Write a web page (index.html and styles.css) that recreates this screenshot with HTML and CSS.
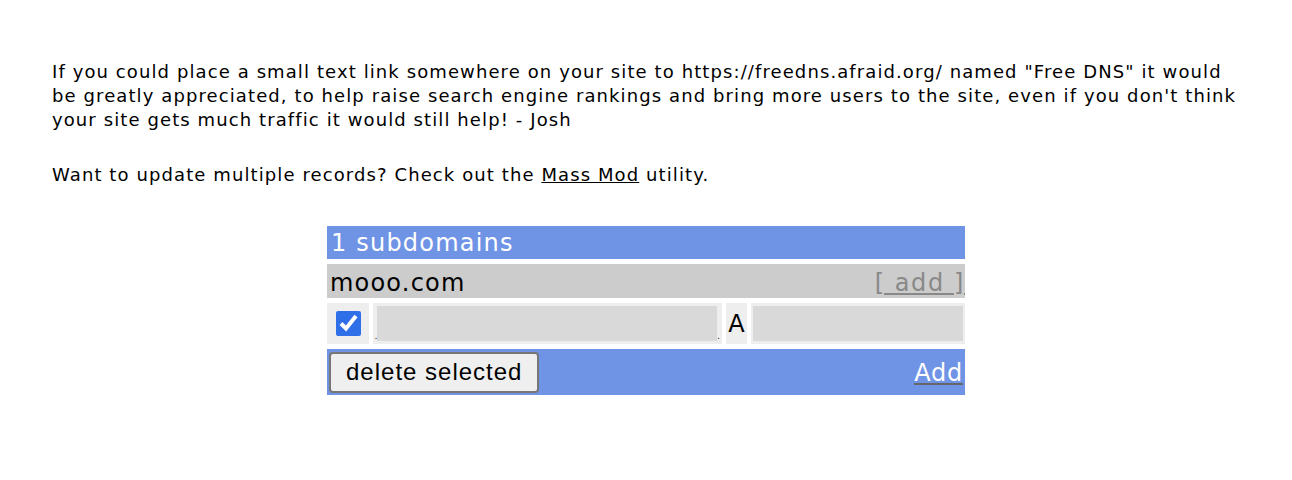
FILE: index.html
```html
<!DOCTYPE html>
<html lang="en">
<head>
  <meta charset="UTF-8" />
  <title>Subdomains</title>
  <link rel="stylesheet" href="styles.css">
</head>
<body>

<div class="content">
  <p class="note">If you could place a small text link somewhere on your site to https://freedns.afraid.org/ named "Free DNS" it would be greatly appreciated, to help raise search engine rankings and bring more users to the site, even if you don't think your site gets much traffic it would still help! - Josh</p>

  <p class="note">Want to update multiple records? Check out the <a href="#">Mass Mod</a> utility.</p>

  <form>
    <table class="records">
      <!-- header -->
      <tr>
        <td colspan="4" class="head">1 subdomains</td>
      </tr>

      <!-- domain row -->
      <tr>
        <td colspan="4" class="domain">
          <span>mooo.com</span>
          <a href="#" class="add-link">[ add ]</a>
        </td>
      </tr>

      <!-- record row -->
      <tr class="record">
        <td class="check"><input type="checkbox" name="sel" checked /></td>
        <td class="field"><span class="dot">.</span><input type="text" class="name" /><span class="dot">.</span></td>
        <td class="type">A</td>
        <td class="field"><input type="text" class="dest" /></td>
      </tr>

      <!-- footer -->
      <tr>
        <td colspan="4" class="foot">
          <button type="submit" class="btn-delete">delete selected</button>
          <a href="#" class="add-bottom">Add</a>
        </td>
      </tr>
    </table>
  </form>
</div>

</body>
</html>
```

FILE: styles.css
```css
body {
  font-family: 'DejaVu Sans', Verdana, sans-serif;
  background-color: white;
  color: black;
  margin: 0;
  padding: 0;
}

.content {
  padding: 60px 52px 0 52px;
}

.note {
  font-size: 18px;
  line-height: 24px;
  letter-spacing: 1.1px;
  margin: 0 0 31px 0;
}

.note a {
  color: black;
}

.records {
  margin: 34px auto 0 auto;
  width: 646px;
  border-spacing: 4px 5px;
  font-size: 24px;
  letter-spacing: 1.2px;
}

.records td {
  padding: 0;
}

.head {
  background-color: #6f93e5;
  color: white;
  padding: 2px 0 0 4px !important;
  line-height: 31px;
}

.domain {
  background-color: #cccccc;
  padding: 4px 0 0 3px !important;
  line-height: 30px;
}

.domain span {
  float: left;
}

.add-link {
  float: right;
  color: #888888;
  letter-spacing: 1.6px;
}

.record td {
  background-color: #eeeeee;
  height: 41px;
  line-height: 20px;
}

.check {
  width: 44px;
  text-align: center;
}

.check input {
  width: 25px;
  height: 25px;
  margin: 0 0 0 2px;
  vertical-align: middle;
  accent-color: #2f6fe8;
}

.field {
  white-space: nowrap;
  padding: 0 2px !important;
}

.field input {
  border: none;
  background-color: #d9d9d9;
  height: 35px;
  margin: 0;
  padding: 0 4px;
  vertical-align: middle;
  box-sizing: border-box;
}

.name {
  width: 340px;
}

.dest {
  width: 210px;
}

.dot {
  font-size: 8px;
  line-height: 8px;
  letter-spacing: 0;
  vertical-align: bottom;
}

.type {
  width: 22px;
  text-align: center;
  letter-spacing: 0;
}

.foot {
  background-color: #6f93e5;
  height: 46px;
  line-height: 44px;
  padding: 0 2px !important;
}

.btn-delete {
  font-family: 'Liberation Sans', Arial, sans-serif;
  font-size: 24px;
  letter-spacing: 1px;
  padding: 0 15px;
  background-color: #efefef;
  border: 2px solid #767676;
  border-radius: 4px;
  color: black;
  height: 41px;
  vertical-align: middle;
}

.add-bottom {
  float: right;
  color: white;
  line-height: 44px;
  padding-top: 2px;
  letter-spacing: 0.8px;
  text-decoration-color: #666666;
}
```
